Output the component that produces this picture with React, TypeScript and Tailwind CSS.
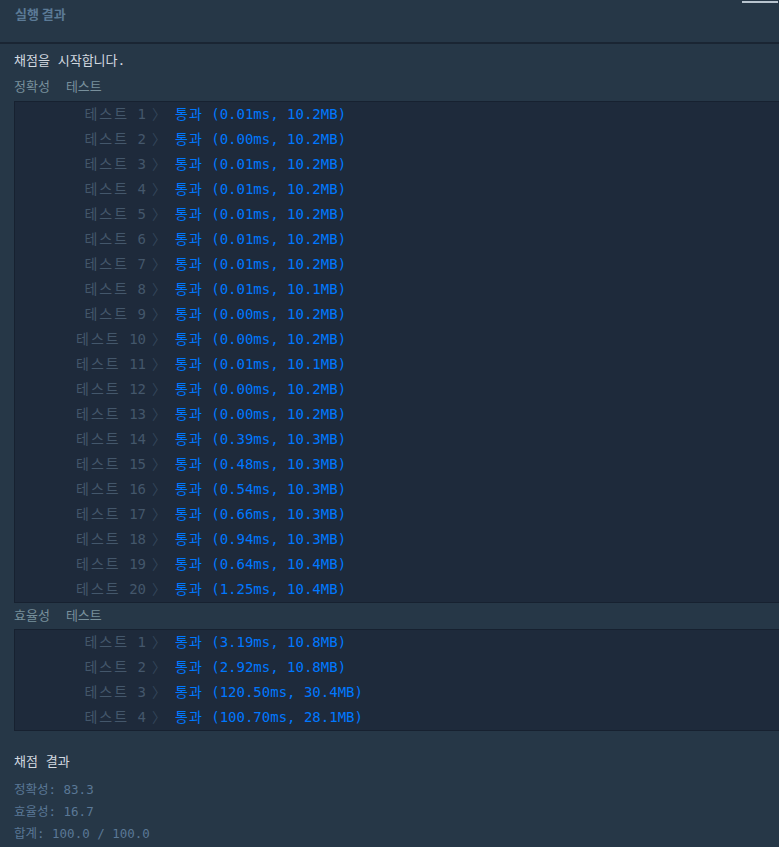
const accuracy = [
  ['0.01ms', '10.2MB'],
  ['0.00ms', '10.2MB'],
  ['0.01ms', '10.2MB'],
  ['0.01ms', '10.2MB'],
  ['0.01ms', '10.2MB'],
  ['0.01ms', '10.2MB'],
  ['0.01ms', '10.2MB'],
  ['0.01ms', '10.1MB'],
  ['0.00ms', '10.2MB'],
  ['0.00ms', '10.2MB'],
  ['0.01ms', '10.1MB'],
  ['0.00ms', '10.2MB'],
  ['0.00ms', '10.2MB'],
  ['0.39ms', '10.3MB'],
  ['0.48ms', '10.3MB'],
  ['0.54ms', '10.3MB'],
  ['0.66ms', '10.3MB'],
  ['0.94ms', '10.3MB'],
  ['0.64ms', '10.4MB'],
  ['1.25ms', '10.4MB'],
];

const efficiency = [
  ['3.19ms', '10.8MB'],
  ['2.92ms', '10.8MB'],
  ['120.50ms', '30.4MB'],
  ['100.70ms', '28.1MB'],
];

function ResultTable({ rows }: { rows: string[][] }) {
  return (
    <div className="border border-r-0 border-[#172130] bg-[#1e2a3b]">
      {rows.map(([time, mem], i) => (
        <div key={i} className="flex h-[25px] items-center whitespace-pre text-[14px]">
          <span className="w-[131px] text-right text-[#44576b]">
            <span className="tracking-[2px]">테스트</span> {i + 1}
          </span>
          <span className="ml-[6px] text-[#33455a]">〉</span>
          <span className="ml-[9px] text-[#0078ff]">
            <span className="tracking-[1px]">통과</span> ({time}, {mem})
          </span>
        </div>
      ))}
    </div>
  );
}

export default function App() {
  return (
    <div className="min-h-[847px] bg-[#263747] font-['DejaVu_Sans_Mono','Noto_Sans_CJK_KR',monospace]">
      <div className="relative h-[44px] border-b-2 border-[#1a2533]">
        <div className="pl-[15px] pt-[4px] font-['Noto_Sans_CJK_KR',sans-serif] text-[13px] font-bold text-[#5b7a96]">
          실행 결과
        </div>
        <div className="absolute right-[1px] top-[1px] h-[2px] w-[36px] bg-[#b8c4cf]" />
      </div>

      <div className="pl-[14px]">
        <div className="pt-[8px] text-[13px] leading-[18px] text-[#d2d9e0]">채점을 시작합니다.</div>
        <div className="mt-[8px] flex h-[18px] items-center text-[13px] text-[#78909c]">
          <span>정확성</span>
          <span className="ml-[16px]">테스트</span>
        </div>
        <div className="mt-[5px]">
          <ResultTable rows={accuracy} />
        </div>
        <div className="flex h-[26px] items-center text-[13px] text-[#78909c]">
          <span>효율성</span>
          <span className="ml-[16px]">테스트</span>
        </div>
        <ResultTable rows={efficiency} />

        <div className="mt-[22px] text-[13px] leading-[18px] text-[#d2d9e0]">채점 결과</div>
        <div className="mt-[8px] flex flex-col text-[12.5px] leading-[22px] text-[#5a7896]">
          <span>정확성: 83.3</span>
          <span>효율성: 16.7</span>
          <span>합계: 100.0 / 100.0</span>
        </div>
      </div>
    </div>
  );
}
